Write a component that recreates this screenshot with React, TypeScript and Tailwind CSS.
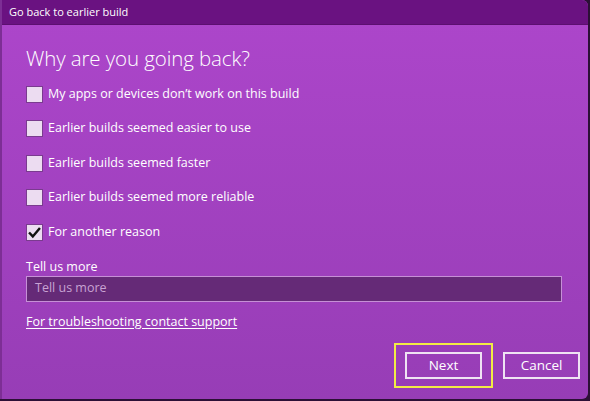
const reasons = [
  { label: "My apps or devices don\u2019t work on this build", checked: false },
  { label: "Earlier builds seemed easier to use", checked: false },
  { label: "Earlier builds seemed faster", checked: false },
  { label: "Earlier builds seemed more reliable", checked: false },
  { label: "For another reason", checked: true },
];

function CheckBox({ checked }: { checked: boolean }) {
  return (
    <span className="flex h-[17px] w-[17px] shrink-0 items-center justify-center border-[1.5px] border-[#7a3b8f] bg-[#ecdcf1]">
      {checked && (
        <svg viewBox="0 0 16 16" className="h-[15px] w-[15px]">
          <path d="M2.2 8 L6.2 12.2 L13.8 3.2" fill="none" stroke="#111" strokeWidth="2.6" />
        </svg>
      )}
    </span>
  );
}

export default function App() {
  return (
    <main
      className="flex h-[401px] w-[590px] flex-col overflow-hidden bg-[#2c1036] text-white"
      style={{ fontFamily: '"Segoe UI", "Open Sans", "Noto Sans", sans-serif' }}
    >
      <div className="flex h-[399px] w-[588px] flex-col overflow-hidden rounded-br-[6px] rounded-tr-[6px] border-l-2 border-[#7d2e95] bg-gradient-to-b from-[#ad46cb] to-[#973db6]">
        <header className="flex h-[25px] shrink-0 items-center border-b border-[#5c0f70] bg-[#6a1281] pl-[7px] text-[11px]">
          Go back to earlier build
        </header>

        <section className="flex flex-1 flex-col pl-[24px] pr-[8px]">
          <h1 className="mt-[19px] h-[28px] text-[20.5px] font-light leading-[28px] tracking-[-0.1px]">
            Why are you going back?
          </h1>

          <div className="mt-[5px] flex flex-col">
            {reasons.map((reason) => (
              <label key={reason.label} className="flex h-[34.5px] items-center gap-[5px] text-[12.5px]">
                <CheckBox checked={reason.checked} />
                <span>{reason.label}</span>
              </label>
            ))}
          </div>

          <p className="mt-[8px] text-[12.5px] leading-[18px]">Tell us more</p>
          <div className="mr-[-2px] flex h-[26px] w-[536px] items-center border border-[#c690d6] bg-[#652a77] px-[8px] text-[12.5px] text-[#c8a3d3]">
            Tell us more
          </div>

          <a href="#" className="mt-[11px] self-start text-[12.5px] leading-[18px] underline underline-offset-2">
            For troubleshooting contact support
          </a>

          <div className="mt-[12px] flex items-center justify-end gap-[10px]">
            <div className="border-2 border-[#f2ec44] px-[9px] py-[7px]">
              <button className="h-[27px] w-[77px] border-2 border-[#efe3f3] text-[13.5px]">Next</button>
            </div>
            <button className="h-[27px] w-[77px] border-2 border-[#efe3f3] text-[13.5px]">Cancel</button>
          </div>
        </section>
      </div>
    </main>
  );
}
